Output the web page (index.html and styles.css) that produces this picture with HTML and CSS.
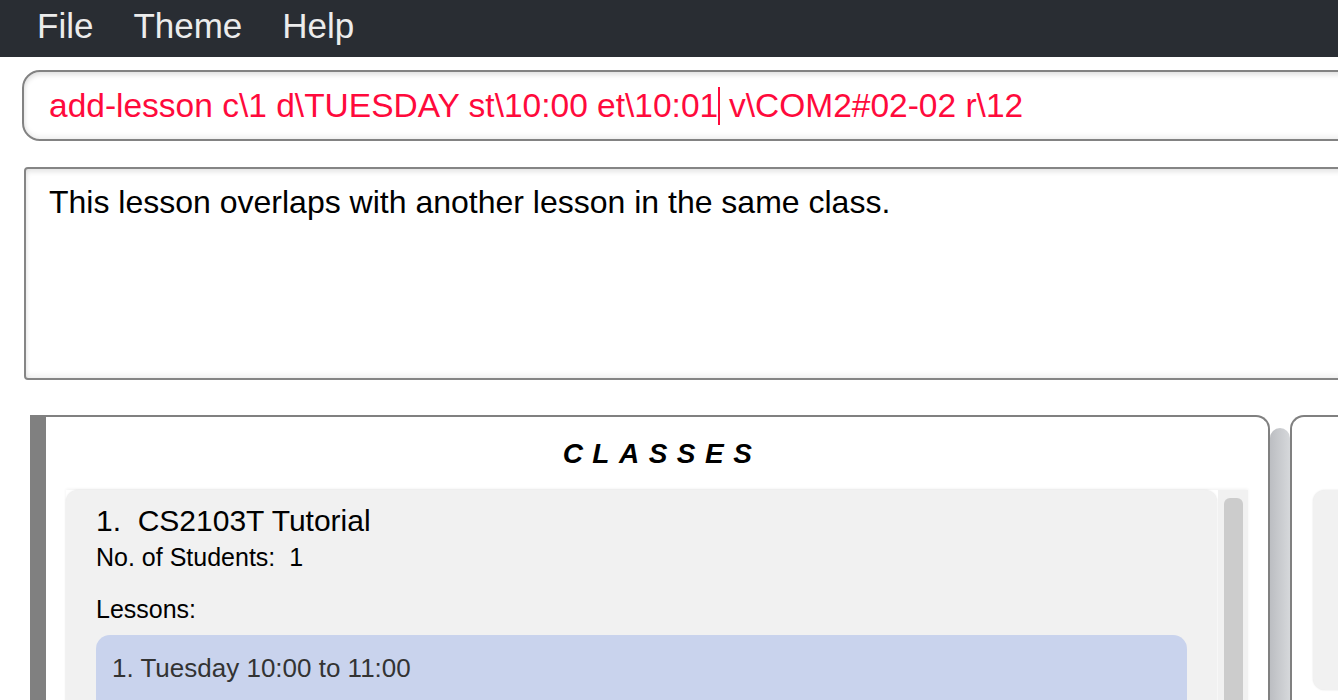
FILE: index.html
```html
<!DOCTYPE html>
<html>
<head>
<meta charset="utf-8">
<link rel="stylesheet" href="styles.css">
</head>
<body>
<div class="app">
  <nav class="menubar">
    <span class="menu-item">File</span>
    <span class="menu-item">Theme</span>
    <span class="menu-item">Help</span>
  </nav>
  <div class="command-box">
    <span class="cmd-text">add-lesson c\1 d\TUESDAY st\10:00 et\10:01</span><span class="caret"></span><span class="cmd-text"> v\COM2#02-02 r\12</span>
  </div>
  <div class="result-box">This lesson overlaps with another lesson in the same class.</div>
  <div class="panels">
    <section class="panel panel-classes">
      <h2 class="panel-title">CLASSES</h2>
      <div class="list">
        <div class="list-cells">
          <div class="card">
            <div class="card-title">1.&nbsp; CS2103T Tutorial</div>
            <div class="card-line">No. of Students:&nbsp; 1</div>
            <div class="card-label">Lessons:</div>
            <div class="lesson">1. Tuesday 10:00 to 11:00</div>
          </div>
        </div>
        <div class="vscroll"><div class="vthumb"></div></div>
      </div>
    </section>
    <div class="divider"></div>
    <section class="panel panel-second">
      <div class="card card-second"></div>
    </section>
  </div>
</div>
</body>
</html>
```

FILE: styles.css
```css
html, body {
  margin: 0;
  padding: 0;
  background: #ffffff;
  overflow: hidden;
  height: 700px;
}
.app {
  width: 1338px;
  height: 700px;
  overflow: hidden;
  font-family: "Liberation Sans", Arial, sans-serif;
}
.menubar {
  height: 57px;
  background: #292d33;
  display: flex;
  align-items: flex-start;
  padding-left: 17px;
}
.menu-item {
  color: #ececec;
  font-size: 35px;
  line-height: 52px;
  padding: 0 20px;
}
.command-box {
  margin: 13px 0 0 22px;
  width: 1400px;
  height: 67px;
  border: 2px solid #828282;
  border-radius: 18px;
  box-shadow: inset 0 3px 5px rgba(0,0,0,0.12), inset 0 -3px 5px rgba(0,0,0,0.06);
  display: flex;
  align-items: center;
  padding-left: 25px;
  box-sizing: content-box;
  white-space: pre;
}
.cmd-text {
  color: #ff0a3c;
  font-size: 33.5px;
}
.caret {
  display: inline-block;
  width: 1.5px;
  height: 38px;
  background: #ff0a3c;
}
.result-box {
  margin: 26px 0 0 24px;
  width: 1400px;
  height: 194px;
  border: 2px solid #858585;
  border-radius: 4px;
  box-shadow: inset 0 3px 5px rgba(0,0,0,0.10), inset 0 -3px 5px rgba(0,0,0,0.06);
  padding: 15px 0 0 23px;
  font-size: 32px;
  color: #000;
}
.panels {
  margin: 35px 0 0 30px;
  display: flex;
  width: 1400px;
  height: 300px;
}
.panel {
  border-top: 2px solid #808080;
  box-sizing: border-box;
  height: 320px;
}
.panel-classes {
  flex: 0 0 1240px;
  width: 1240px;
  border-left: 16px solid #808080;
  border-right: 2px solid #808080;
  border-top-right-radius: 14px;
  display: flex;
  flex-direction: column;
  padding: 0 20px 0 20px;
}
.panel-title {
  flex: 0 0 73px;
  margin: 0;
  height: 73px;
  box-sizing: border-box;
  padding-top: 21px;
  text-align: center;
  font-size: 28px;
  font-weight: bold;
  font-style: italic;
  letter-spacing: 9.5px;
  line-height: 32px;
  color: #000;
  padding-left: 10px;
}
.list {
  display: flex;
  background: #ffffff;
  box-shadow: 0 -1px 3px rgba(0,0,0,0.06);
}
.list-cells {
  flex: 1;
}
.card {
  background: #f1f1f1;
  border-radius: 12px;
  box-shadow: 0 0 2px rgba(0,0,0,0.12);
  padding: 13px 30px 20px 30px;
  height: 300px;
  box-sizing: border-box;
}
.card-title {
  font-size: 30px;
  line-height: 36px;
  color: #000;
}
.card-line {
  font-size: 25px;
  line-height: 30px;
  margin-top: 3px;
  color: #000;
}
.card-label {
  font-size: 25px;
  line-height: 30px;
  margin-top: 22px;
  color: #000;
}
.lesson {
  margin-top: 11px;
  background: #c9d3ed;
  border-radius: 14px;
  padding: 17px 16px 16px;
  font-size: 26px;
  line-height: 32px;
  color: #333333;
  height: 120px;
}
.vscroll {
  flex: 0 0 30px;
  margin-left: 1px;
  background: #f1f1f1;
  padding: 8px 5px 0 6px;
  box-sizing: border-box;
}
.vthumb {
  height: 260px;
  background: #cccccc;
  border-radius: 6px;
}
.divider {
  flex: 0 0 20px;
  margin-top: 13px;
  height: 300px;
  border-radius: 10px 10px 0 0;
  background: linear-gradient(to right, #bcbec2, #d6d8db);
}
.panel-second {
  flex: 1;
  border-left: 2px solid #808080;
  border-top-left-radius: 14px;
  padding: 73px 0 0 21px;
}
.card-second {
  height: 200px;
  border-radius: 12px 0 0 12px;
}
```
